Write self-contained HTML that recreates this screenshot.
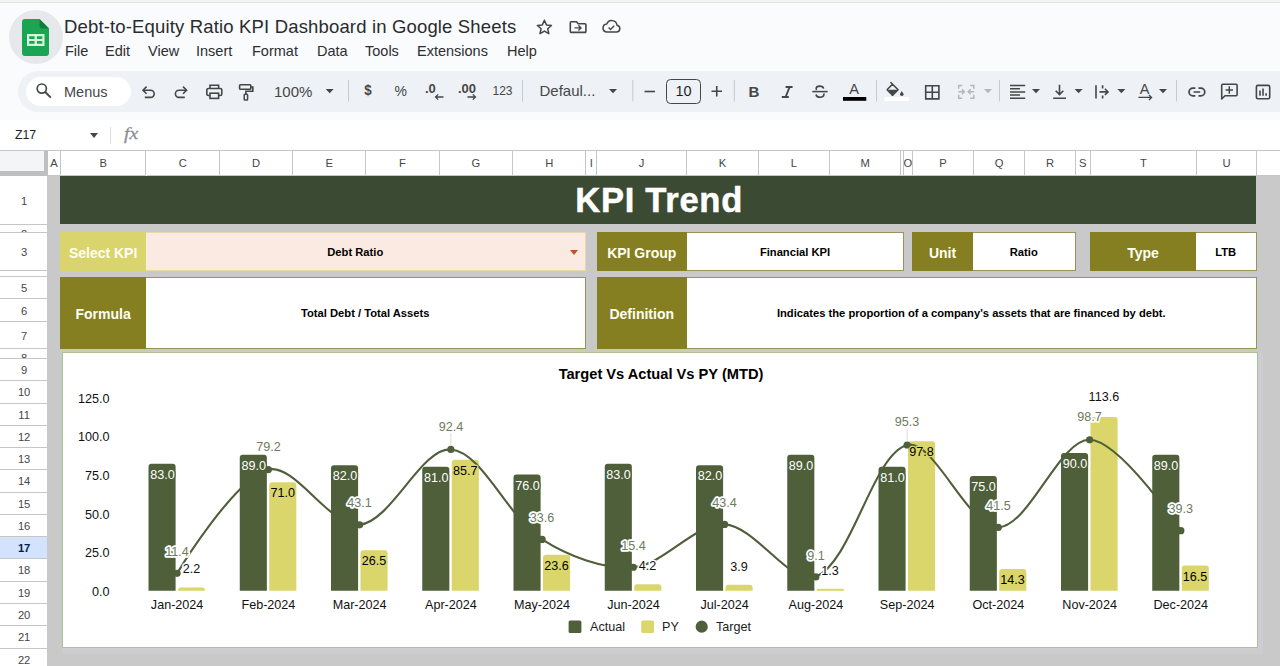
<!DOCTYPE html>
<html><head><meta charset="utf-8"><title>Debt-to-Equity Ratio KPI Dashboard</title>
<style>
html,body{margin:0;padding:0;}
html{overflow:hidden;width:1280px;height:666px;font-family:"Liberation Sans", sans-serif;}
body{width:1280px;height:666px;overflow:hidden;position:relative;background:#fff;font-family:"Liberation Sans", sans-serif;}
.abs{position:absolute;}
svg text{font-family:"Liberation Sans", sans-serif;}
.colh{position:absolute;top:151px;height:25px;line-height:24.5px;box-sizing:border-box;border-right:1px solid #c4c7c5;border-bottom:1px solid #c4c7c5;background:#fff;color:#444746;font-size:11.2px;text-align:center;overflow:hidden;}
.rowh{position:absolute;left:0;width:47.25px;box-sizing:border-box;border-bottom:1px solid #c4c7c5;background:#fff;color:#444746;font-size:11.2px;text-align:center;overflow:hidden;}
.rowh.sel{background:#d3e3fd;color:#041e49;font-weight:bold;}
.box{box-sizing:border-box;display:flex;align-items:center;justify-content:center;white-space:nowrap;}
.lab{color:#fffef2;font-weight:bold;font-size:14px;padding-top:2px;}
.val{color:#000;font-weight:bold;font-size:11.2px;}
.ttl{color:#fff;font-weight:bold;font-size:34.6px;letter-spacing:0.7px;-webkit-text-stroke:0.5px #fff;position:relative;top:0.5px;left:1px}
.ctitle{text-align:center;font-weight:bold;font-size:14.65px;color:#000;}
.doc-title{font-size:18.5px;letter-spacing:0.16px;color:#2a2b2d;white-space:nowrap;}
.menu{font-size:14.5px;color:#2d2e30;white-space:nowrap;}
.tb{font-size:14.5px;color:#444746;white-space:nowrap;}
</style></head>
<body>
<div id="root" style="position:absolute;left:0;top:0;width:1280px;height:666px;overflow:hidden">
<div class="abs" style="left:0;top:0;width:1280px;height:120px;background:#f9fbfd"></div>
<div class="abs" style="left:0;top:0;width:1280px;height:2px;background:#f4f3ef"></div>
<div class="abs" style="left:0;top:2px;width:1280px;height:1px;background:#e3e3e3"></div>
<div class="abs" style="left:8.5px;top:10px;width:54px;height:54px;border-radius:50%;background:#e6e8ec"></div>
<svg class="abs" style="left:22px;top:19px" width="27" height="37" viewBox="0 0 27 37">
<path d="M3 0H17.5L27 9.5V34a3 3 0 0 1-3 3H3a3 3 0 0 1-3-3V3a3 3 0 0 1 3-3Z" fill="#1aa553"/>
<path d="M17.5 0L27 9.5H20.5a3 3 0 0 1-3-3Z" fill="#0c7f3a"/>
<path d="M5 15h17.5v12H5Z M7.2 17.2v2.7h5.4v-2.7Z M14.9 17.2v2.7h5.4v-2.7Z M7.2 22.1v2.7h5.4v-2.7Z M14.9 22.1v2.7h5.4v-2.7Z" fill="#d6f5dc" fill-rule="evenodd"/>
</svg>
<div class="abs doc-title" style="left:64px;top:16px">Debt-to-Equity Ratio KPI Dashboard in Google Sheets</div>
<div class="abs menu" style="left:65px;top:42.5px">File</div>
<div class="abs menu" style="left:105px;top:42.5px">Edit</div>
<div class="abs menu" style="left:148px;top:42.5px">View</div>
<div class="abs menu" style="left:196px;top:42.5px">Insert</div>
<div class="abs menu" style="left:252px;top:42.5px">Format</div>
<div class="abs menu" style="left:317px;top:42.5px">Data</div>
<div class="abs menu" style="left:365px;top:42.5px">Tools</div>
<div class="abs menu" style="left:417px;top:42.5px">Extensions</div>
<div class="abs menu" style="left:507px;top:42.5px">Help</div>
<div class="abs" style="left:17.5px;top:71px;width:1300px;height:41px;border-radius:21px;background:#eef1f6"></div>
<div class="abs" style="left:25.5px;top:77px;width:105px;height:29px;border-radius:15px;background:#fff"></div>
<div class="abs tb" style="left:64px;top:83.5px;">Menus</div>
<div class="abs" style="left:0;top:120px;width:1280px;height:30px;background:#fff"></div>
<div class="abs" style="left:15px;top:127.5px;font-size:12.3px;color:#202124;">Z17</div>
<div class="abs" style="left:90px;top:132.5px;width:0;height:0;border-left:4.5px solid transparent;border-right:4.5px solid transparent;border-top:5px solid #444746"></div>
<div class="abs" style="left:110px;top:127px;width:1px;height:17px;background:#dadce0"></div>
<div class="abs" style="left:123.5px;top:124px;font-size:17px;transform:scaleX(1.15);transform-origin:0 0;font-style:italic;color:#8a8f95;-webkit-text-stroke:0.3px #8a8f95;font-family:'Liberation Serif',serif;">fx</div>
<svg class="abs" style="left:0;top:0" width="1280" height="120" viewBox="0 0 1280 120" fill="none" stroke="#444746" stroke-width="1.6" stroke-linecap="butt" stroke-linejoin="miter">
<!-- header icons -->
<path d="M544.4 20.3l2.05 4.6 5 .5-3.75 3.35 1.1 4.9-4.4-2.6-4.4 2.6 1.1-4.9-3.75-3.35 5-.5z" stroke-linejoin="round" stroke-width="1.5"/>
<path d="M571.2 21.8h5.3l1.7 1.9h6.8a.9.9 0 0 1 .9.9v6.9a.9.9 0 0 1-.9.9h-13.8a.9.9 0 0 1-.9-.9v-8.8a.9.9 0 0 1 .9-.9z" stroke-width="1.6" stroke-linejoin="round"/>
<path d="M574.5 27.9h6.2M578.4 25.3l2.6 2.6-2.6 2.6" stroke-width="1.4"/>
<path d="M606.5 32h10a3.4 3.4 0 0 0 .5-6.75 5.3 5.3 0 0 0-10.2-1.3A4.05 4.05 0 0 0 606.5 32z" stroke-width="1.5" stroke-linejoin="round"/>
<path d="M608.6 27.6l1.9 1.9 3.7-3.7" stroke-width="1.4"/>
<!-- search -->
<circle cx="41.8" cy="88.6" r="4.6" stroke-width="1.7"/>
<path d="M45.2 92l5.6 5.6" stroke-width="1.9"/>
<!-- undo -->
<path d="M146.6 86.6l-3.6 3.6 3.6 3.6" stroke-width="1.6"/>
<path d="M143.4 90.2h7.2a3.6 3.6 0 0 1 0 7.2h-5.8" stroke-width="1.6"/>
<!-- redo -->
<path d="M183 86.6l3.6 3.6-3.6 3.6" stroke-width="1.6"/>
<path d="M186.2 90.2h-7.2a3.6 3.6 0 0 0 0 7.2h5.8" stroke-width="1.6"/>
<!-- print -->
<path d="M210 88.5v-3.3h8.6v3.3" stroke-width="1.6"/>
<rect x="206.8" y="88.5" width="15" height="7" rx="1.6" stroke-width="1.6"/>
<rect x="210" y="93.2" width="8.6" height="5.2" fill="#eef1f6" stroke-width="1.6"/>
<!-- paint format -->
<rect x="239.6" y="84.8" width="11.2" height="4.4" rx="0.8" stroke-width="1.6"/>
<path d="M250.8 87h2v4.3h-6.9v3" stroke-width="1.6"/>
<rect x="244.2" y="94.3" width="3.4" height="5.8" rx="0.8" stroke-width="1.5"/>
<!-- separators -->
<g stroke="#c7c9cc" stroke-width="1">
<path d="M348.5 80v21.5M522.5 80v21.5M632.8 80v21.5M734.3 80v21.5M876.5 80v21.5M999.5 80v21.5M1176.5 80v21.5"/>
</g>
<!-- carets -->
<g fill="#444746" stroke="none">
<path d="M325.7 89h8l-4 4.2z"/>
<path d="M609 89h8l-4 4.2z"/>
<path d="M1032 89h8l-4 4.2z"/>
<path d="M1074.6 89h8l-4 4.2z"/>
<path d="M1117.4 89h8l-4 4.2z"/>
<path d="M1159 89h8l-4 4.2z"/>
</g>
<path d="M984 89h8l-4 4.2z" fill="#b4b7bb" stroke="none"/>
<!-- decimal arrows -->
<path d="M443.5 97h-8M438.2 94.4l-2.7 2.6 2.7 2.6" stroke-width="1.3"/>
<path d="M467.5 97h8M472.8 94.4l2.7 2.6-2.7 2.6" stroke-width="1.3"/>
<!-- minus / plus -->
<path d="M644.5 91.5h10.5" stroke-width="1.6"/>
<path d="M711.5 91.3h10.5M716.75 86v10.5" stroke-width="1.6"/>
<rect x="666.5" y="79.5" width="34" height="24" rx="4" stroke-width="1" stroke="#444746"/>
<!-- italic -->
<path d="M785.6 87h7M781.8 97h7M789.6 87l-4 10" stroke-width="1.9"/>
<!-- strikethrough -->
<path d="M812.3 91.6h15.4" stroke-width="1.5"/>
<path d="M823.6 88.6c-.3-1.6-1.7-2.5-3.7-2.5-2.2 0-3.7 1-3.7 2.5 0 .5.1.9.4 1.3M816 94.5c.3 1.7 1.8 2.7 4 2.7s3.900-1 3.900-2.600c0-.4-.1-.8-.3-1.100" stroke-width="1.6"/>
<!-- text color bar -->
<rect x="843" y="97" width="23.3" height="3.8" fill="#000" stroke="none"/>
<!-- fill color -->
<rect x="884.5" y="97" width="24.3" height="4" fill="#fff" stroke="none"/>
<path d="M890.5 82.2l7.6 7.6-5 5a.8.8 0 0 1-1.100 0l-4.500-4.500a.8.8 0 0 1 0-1.100l5.200-5.200" stroke-width="1.6" stroke-linejoin="round"/>
<path d="M887.6 89.800h10.200l-5.300 5.200z" fill="#444746" stroke="none"/>
<path d="M901.8 91.200s-1.800 2-1.800 3.100a1.800 1.800 0 0 0 3.600 0c0-1.100-1.800-3.100-1.800-3.100z" fill="#444746" stroke="none"/>
<!-- borders -->
<path d="M925.700 85.700h13.200v13.200h-13.200zM932.300 85.700v13.200M925.700 92.300h13.200" stroke-width="1.600"/>
<!-- merge (disabled) -->
<g stroke="#b4b7bb" stroke-width="1.500">
<path d="M962.300 85.400h-3.600v3.400M962.300 98.200h-3.600v-3.400M970.200 85.400h3.600v3.400M970.200 98.200h3.600v-3.400"/>
<path d="M958.300 91.800h5.800M961.900 89.400l2.400 2.400-2.400 2.400M974.200 91.800h-5.800M970.600 89.400l-2.400 2.400 2.400 2.400"/>
</g>
<!-- align left -->
<path d="M1010 85.500h15.200M1010 88.700h10M1010 91.900h15.200M1010 95.100h10M1010 98.300h15.200" stroke-width="1.500"/>
<!-- valign bottom -->
<path d="M1059.500 84.800v9.600M1055.700 90.800l3.800 3.800 3.800-3.800M1053.200 98.300h12.800" stroke-width="1.600"/>
<!-- wrap overflow -->
<path d="M1096 85.200v13.400M1102.600 85.200v3.200M1102.600 95.400v3.200M1099.500 91.900h8.200M1104.900 88.800l3.100 3.100-3.100 3.100" stroke-width="1.600"/>
<!-- rotate -->
<path d="M1138.400 97.400h13M1149 94.900l2.500 2.500-2.500 2.500" stroke-width="1.400"/>
<!-- link -->
<path d="M1195.300 88.100h-2.400a3.900 3.900 0 0 0 0 7.800h2.400M1198.500 88.100h2.400a3.900 3.900 0 0 1 0 7.800h-2.400M1193.600 92h6.600" stroke-width="1.700"/>
<!-- comment -->
<path d="M1222.600 84.300h13.600a.9.900 0 0 1 .9.900v9.600a.9.900 0 0 1-.9.900h-11.200l-3.300 3.300v-13.800a.9.900 0 0 1 .9-.9z" stroke-width="1.600" stroke-linejoin="round"/>
<path d="M1225.600 90h7.400M1229.300 86.300v7.400" stroke-width="1.500"/>
<!-- chart -->
<rect x="1256.400" y="85.400" width="13.300" height="13.300" rx="1.500" stroke-width="1.600"/>
<path d="M1260 90.500v5.200M1263 88.400v7.300M1266.100 93.200v2.500" stroke-width="1.600"/>
</svg>
<div class="abs tb" style="left:274px;top:82.500px;font-size:15px">100%</div>
<div class="abs tb" style="left:363.500px;top:82px;font-size:14px;font-weight:bold;color:#444746;transform:scaleX(.95)">$</div>
<div class="abs tb" style="left:394.500px;top:82.500px;font-size:14px;">%</div>
<div class="abs tb" style="left:425px;top:81px;font-size:13px;font-weight:bold">.0</div>
<div class="abs tb" style="left:458px;top:81px;font-size:13px;font-weight:bold">.00</div>
<div class="abs tb" style="left:492.500px;top:84px;font-size:12px;">123</div>
<div class="abs tb" style="left:539.500px;top:82px;font-size:15px;">Defaul...</div>
<div class="abs tb" style="left:666.500px;top:82.500px;width:34px;text-align:center;font-size:14.500px;color:#1f1f1f">10</div>
<div class="abs tb" style="left:748.500px;top:82.500px;font-size:15px;font-weight:bold;">B</div>
<div class="abs tb" style="left:849.300px;top:80.800px;font-size:14.600px;">A</div>
<div class="abs tb" style="left:1139.800px;top:80.500px;font-size:14.500px;">A</div>

<div class="abs" style="left:47px;top:175px;width:1233px;height:491px;background:#c9c9c9"></div>
<div class="abs box " style="left:60.25px;top:176px;width:1195.75px;height:47.5px;background:#3b4a32;"><span class="ttl">KPI Trend</span></div>
<div class="abs box lab" style="left:60.25px;top:232.4px;width:85.75px;height:38.599999999999994px;background:#d9d46c;">Select KPI</div>
<div class="abs box val" style="left:146px;top:232.4px;width:439.5px;height:38.599999999999994px;background:#fbeae2;border:1px solid #ead9a8;border-left:none;padding-right:20px;">Debt Ratio</div>
<div class="abs" style="left:570px;top:250px;width:0;height:0;border-left:4.5px solid transparent;border-right:4.5px solid transparent;border-top:5px solid #c4512c"></div>
<div class="abs box lab" style="left:596.5px;top:232.4px;width:90.5px;height:38.599999999999994px;background:#857f21;">KPI Group</div>
<div class="abs box val" style="left:687px;top:232.4px;width:217px;height:38.599999999999994px;background:#fff;border:1px solid #99935a;border-left:none;">Financial KPI</div>
<div class="abs box lab" style="left:912px;top:232.4px;width:61px;height:38.599999999999994px;background:#857f21;">Unit</div>
<div class="abs box val" style="left:973px;top:232.4px;width:102.5px;height:38.599999999999994px;background:#fff;border:1px solid #99935a;border-left:none;">Ratio</div>
<div class="abs box lab" style="left:1090px;top:232.4px;width:106px;height:38.599999999999994px;background:#857f21;">Type</div>
<div class="abs box val" style="left:1196px;top:232.4px;width:60.5px;height:38.599999999999994px;background:#fff;border:1px solid #99935a;border-left:none;">LTB</div>
<div class="abs box lab" style="left:60.25px;top:277px;width:85.75px;height:71.5px;background:#857f21;">Formula</div>
<div class="abs box val" style="left:146px;top:277px;width:439.5px;height:71.5px;background:#fff;border:1px solid #99935a;border-left:none;">Total Debt / Total Assets</div>
<div class="abs box lab" style="left:596.5px;top:277px;width:90.5px;height:71.5px;background:#857f21;">Definition</div>
<div class="abs box val" style="left:687px;top:277px;width:569.5px;height:71.5px;background:#fff;border:1px solid #99935a;border-left:none;">Indicates the proportion of a company's assets that are financed by debt.</div>
<div class="abs" style="left:60.25px;top:349.1px;width:1198.1px;height:4px;background:#c9cdba"></div>
<div class="abs" style="left:1258.4px;top:353px;width:5px;height:300px;background:#cdcdd1"></div>
<div class="abs" style="left:62px;top:648.2px;width:1201.4px;height:6px;background:#cdcdd1"></div>
<div class="abs" style="left:61.9px;top:352.4px;width:1196.5px;height:295.8px;background:#fff;border:1.2px solid #adc09a;box-sizing:border-box"></div>
<div class="abs ctitle" style="left:63.5px;top:366px;width:1195px;">Target Vs Actual Vs PY (MTD)</div>
<div class="abs" style="left:0;top:150px;width:1280px;height:26px;background:#fff;border-top:1px solid #c4c7c5;box-sizing:border-box"></div>
<div class="colh" style="left:48px;width:12.899999999999999px">A</div>
<div class="colh" style="left:60.9px;width:85.6px">B</div>
<div class="colh" style="left:146.5px;width:73.4px">C</div>
<div class="colh" style="left:219.9px;width:73.20000000000002px">D</div>
<div class="colh" style="left:293.1px;width:73.29999999999995px">E</div>
<div class="colh" style="left:366.4px;width:73.30000000000001px">F</div>
<div class="colh" style="left:439.7px;width:73.30000000000001px">G</div>
<div class="colh" style="left:513.0px;width:73.39999999999998px">H</div>
<div class="colh" style="left:586.4px;width:10.899999999999977px">I</div>
<div class="colh" style="left:597.3px;width:89.70000000000005px">J</div>
<div class="colh" style="left:687.0px;width:71.79999999999995px">K</div>
<div class="colh" style="left:758.8px;width:71.10000000000002px">L</div>
<div class="colh" style="left:829.9px;width:71.39999999999998px">M</div>
<div class="colh" style="left:901.3px;width:2.300000000000068px"></div>
<div class="colh" style="left:903.6px;width:9.299999999999955px">O</div>
<div class="colh" style="left:912.9px;width:61.200000000000045px">P</div>
<div class="colh" style="left:974.1px;width:51.10000000000002px">Q</div>
<div class="colh" style="left:1025.2px;width:50.5px">R</div>
<div class="colh" style="left:1075.7px;width:15.099999999999909px">S</div>
<div class="colh" style="left:1090.8px;width:106.0px">T</div>
<div class="colh" style="left:1196.8px;width:60.299999999999955px">U</div>
<div class="colh" style="left:1257.1px;width:43.40000000000009px"></div>
<div class="abs" style="left:0;top:175px;width:47.25px;height:500px;background:#fff"></div>
<div class="rowh" style="top:176px;height:48.69999999999999px;line-height:50.09999999999999px;text-indent:1px">1</div>
<div class="rowh" style="top:224.7px;height:8.100000000000023px;line-height:12px;"><span style="position:relative;top:3.3px;left:0.5px">2</span></div>
<div class="rowh" style="top:232.8px;height:38.30000000000001px;line-height:39.70000000000001px;text-indent:1px">3</div>
<div class="rowh" style="top:271.1px;height:6.199999999999989px;line-height:12px;"><span style="position:relative;top:3.3px;left:0.5px">4</span></div>
<div class="rowh" style="top:277.3px;height:22.19999999999999px;line-height:23.599999999999987px;text-indent:1px">5</div>
<div class="rowh" style="top:299.5px;height:22.5px;line-height:23.9px;text-indent:1px">6</div>
<div class="rowh" style="top:322px;height:27.100000000000023px;line-height:28.50000000000002px;text-indent:1px">7</div>
<div class="rowh" style="top:349.1px;height:9.899999999999977px;line-height:12px;"><span style="position:relative;top:3.3px;left:0.5px">8</span></div>
<div class="rowh" style="top:359.0px;height:22.269999999999982px;line-height:23.66999999999998px;text-indent:1px">9</div>
<div class="rowh" style="top:381.27px;height:22.27000000000004px;line-height:23.670000000000037px;text-indent:1px">10</div>
<div class="rowh" style="top:403.54px;height:22.269999999999982px;line-height:23.66999999999998px;text-indent:1px">11</div>
<div class="rowh" style="top:425.81px;height:22.269999999999982px;line-height:23.66999999999998px;text-indent:1px">12</div>
<div class="rowh" style="top:448.08px;height:22.27000000000004px;line-height:23.670000000000037px;text-indent:1px">13</div>
<div class="rowh" style="top:470.35px;height:22.269999999999982px;line-height:23.66999999999998px;text-indent:1px">14</div>
<div class="rowh" style="top:492.62px;height:22.269999999999982px;line-height:23.66999999999998px;text-indent:1px">15</div>
<div class="rowh" style="top:514.89px;height:22.269999999999982px;line-height:23.66999999999998px;text-indent:1px">16</div>
<div class="rowh sel" style="top:537.16px;height:22.270000000000095px;line-height:23.670000000000094px;text-indent:1px">17</div>
<div class="rowh" style="top:559.4300000000001px;height:22.269999999999982px;line-height:23.66999999999998px;text-indent:1px">18</div>
<div class="rowh" style="top:581.7px;height:22.269999999999982px;line-height:23.66999999999998px;text-indent:1px">19</div>
<div class="rowh" style="top:603.97px;height:22.269999999999982px;line-height:23.66999999999998px;text-indent:1px">20</div>
<div class="rowh" style="top:626.24px;height:22.269999999999982px;line-height:23.66999999999998px;text-indent:1px">21</div>
<div class="rowh" style="top:648.51px;height:22.269999999999982px;line-height:23.66999999999998px;text-indent:1px">22</div>
<div class="rowh" style="top:670.78px;height:22.269999999999982px;line-height:23.66999999999998px;text-indent:1px">23</div>
<div class="abs" style="left:0;top:151px;width:44px;height:20px;background:#f4f5f7"></div>
<div class="abs" style="left:44px;top:151px;width:4px;height:25px;background:#bfbfbf"></div>
<div class="abs" style="left:0;top:171px;width:48px;height:5px;background:#bfbfbf"></div>
<svg class="abs" style="left:0;top:0" width="1280" height="666" viewBox="0 0 1280 666">
<text x="109.6" y="595.8" text-anchor="end" font-size="12.6" fill="#111">0.0</text>
<text x="109.6" y="557.2" text-anchor="end" font-size="12.6" fill="#111">25.0</text>
<text x="109.6" y="518.5" text-anchor="end" font-size="12.6" fill="#111">50.0</text>
<text x="109.6" y="479.9" text-anchor="end" font-size="12.6" fill="#111">75.0</text>
<text x="109.6" y="441.3" text-anchor="end" font-size="12.6" fill="#111">100.0</text>
<text x="109.6" y="402.7" text-anchor="end" font-size="12.6" fill="#111">125.0</text>
<path d="M148.50 590.80V466.81Q148.50 463.81 151.50 463.81H172.60Q175.60 463.81 175.60 466.81V590.80Z" fill="#4f5f3a"/>
<path d="M178.00 590.80V590.43Q178.00 587.43 181.00 587.43H202.10Q205.10 587.43 205.10 590.43V590.80Z" fill="#dbd66c"/>
<path d="M239.75 590.80V457.63Q239.75 454.63 242.75 454.63H263.85Q266.85 454.63 266.85 457.63V590.80Z" fill="#4f5f3a"/>
<path d="M269.25 590.80V485.17Q269.25 482.17 272.25 482.17H293.35Q296.35 482.17 296.35 485.17V590.80Z" fill="#dbd66c"/>
<path d="M331.00 590.80V468.34Q331.00 465.34 334.00 465.34H355.10Q358.10 465.34 358.10 468.34V590.80Z" fill="#4f5f3a"/>
<path d="M360.50 590.80V553.25Q360.50 550.25 363.50 550.25H384.60Q387.60 550.25 387.60 553.25V590.80Z" fill="#dbd66c"/>
<path d="M422.25 590.80V469.87Q422.25 466.87 425.25 466.87H446.35Q449.35 466.87 449.35 469.87V590.80Z" fill="#4f5f3a"/>
<path d="M451.75 590.80V462.68Q451.75 459.68 454.75 459.68H475.85Q478.85 459.68 478.85 462.68V590.80Z" fill="#dbd66c"/>
<path d="M513.50 590.80V477.52Q513.50 474.52 516.50 474.52H537.60Q540.60 474.52 540.60 477.52V590.80Z" fill="#4f5f3a"/>
<path d="M543.00 590.80V557.69Q543.00 554.69 546.00 554.69H567.10Q570.10 554.69 570.10 557.69V590.80Z" fill="#dbd66c"/>
<path d="M604.75 590.80V466.81Q604.75 463.81 607.75 463.81H628.85Q631.85 463.81 631.85 466.81V590.80Z" fill="#4f5f3a"/>
<path d="M634.25 590.80V587.37Q634.25 584.37 637.25 584.37H658.35Q661.35 584.37 661.35 587.37V590.80Z" fill="#dbd66c"/>
<path d="M696.00 590.80V468.34Q696.00 465.34 699.00 465.34H720.10Q723.10 465.34 723.10 468.34V590.80Z" fill="#4f5f3a"/>
<path d="M725.50 590.80V587.83Q725.50 584.83 728.50 584.83H749.60Q752.60 584.83 752.60 587.83V590.80Z" fill="#dbd66c"/>
<path d="M787.25 590.80V457.63Q787.25 454.63 790.25 454.63H811.35Q814.35 454.63 814.35 457.63V590.80Z" fill="#4f5f3a"/>
<rect x="816.75" y="588.81" width="27.10" height="1.99" fill="#dbd66c"/>
<path d="M878.50 590.80V469.87Q878.50 466.87 881.50 466.87H902.60Q905.60 466.87 905.60 469.87V590.80Z" fill="#4f5f3a"/>
<path d="M908.00 590.80V444.17Q908.00 441.17 911.00 441.17H932.10Q935.10 441.17 935.10 444.17V590.80Z" fill="#dbd66c"/>
<path d="M969.75 590.80V479.05Q969.75 476.05 972.75 476.05H993.85Q996.85 476.05 996.85 479.05V590.80Z" fill="#4f5f3a"/>
<path d="M999.25 590.80V571.92Q999.25 568.92 1002.25 568.92H1023.35Q1026.35 568.92 1026.35 571.92V590.80Z" fill="#dbd66c"/>
<path d="M1061.00 590.80V456.10Q1061.00 453.10 1064.00 453.10H1085.10Q1088.10 453.10 1088.10 456.10V590.80Z" fill="#4f5f3a"/>
<path d="M1090.50 590.80V419.99Q1090.50 416.99 1093.50 416.99H1114.60Q1117.60 416.99 1117.60 419.99V590.80Z" fill="#dbd66c"/>
<path d="M1152.25 590.80V457.63Q1152.25 454.63 1155.25 454.63H1176.35Q1179.35 454.63 1179.35 457.63V590.80Z" fill="#4f5f3a"/>
<path d="M1181.75 590.80V568.55Q1181.75 565.55 1184.75 565.55H1205.85Q1208.85 565.55 1208.85 568.55V590.80Z" fill="#dbd66c"/>
<path d="M177.10 573.36C177.10 573.36 234.02 478.75 268.35 469.62C294.85 462.58 330.77 528.05 359.60 524.86C391.60 521.32 421.64 447.10 450.85 449.43C482.47 451.95 507.23 516.88 542.10 539.39C568.06 556.15 603.77 569.67 633.35 567.24C664.60 564.67 694.84 522.83 724.60 524.40C755.67 526.04 791.74 587.37 815.85 576.88C852.58 560.90 872.66 454.35 907.10 444.99C933.49 437.82 968.37 528.16 998.35 527.30C1029.20 526.43 1059.46 439.23 1089.60 439.79C1120.30 440.36 1180.85 530.67 1180.85 530.67" fill="none" stroke="#4f5f3a" stroke-width="2.1"/>
<circle cx="177.10" cy="573.36" r="3.6" fill="#4f5f3a"/>
<circle cx="268.35" cy="469.62" r="3.6" fill="#4f5f3a"/>
<circle cx="359.60" cy="524.86" r="3.6" fill="#4f5f3a"/>
<circle cx="450.85" cy="449.43" r="3.6" fill="#4f5f3a"/>
<circle cx="542.10" cy="539.39" r="3.6" fill="#4f5f3a"/>
<circle cx="633.35" cy="567.24" r="3.6" fill="#4f5f3a"/>
<circle cx="724.60" cy="524.40" r="3.6" fill="#4f5f3a"/>
<circle cx="815.85" cy="576.88" r="3.6" fill="#4f5f3a"/>
<circle cx="907.10" cy="444.99" r="3.6" fill="#4f5f3a"/>
<circle cx="998.35" cy="527.30" r="3.6" fill="#4f5f3a"/>
<circle cx="1089.60" cy="439.79" r="3.6" fill="#4f5f3a"/>
<circle cx="1180.85" cy="530.67" r="3.6" fill="#4f5f3a"/>
<path d="M450.9 445.4V433.4" stroke="#dcdcdc" stroke-width="1"/>
<path d="M907.1 441.0V429.0" stroke="#dcdcdc" stroke-width="1"/>
<text x="177.1" y="556.2" font-size="12.6" text-anchor="middle" paint-order="stroke" stroke-linejoin="round" fill="#6e7a5c" stroke="#fff" stroke-width="3.4">11.4</text>
<text x="268.4" y="451.0" font-size="12.6" text-anchor="middle" paint-order="stroke" stroke-linejoin="round" fill="#6e7a5c" stroke="#fff" stroke-width="3.4">79.2</text>
<text x="359.6" y="507.0" font-size="12.6" text-anchor="middle" paint-order="stroke" stroke-linejoin="round" fill="#6e7a5c" stroke="#fff" stroke-width="3.4">43.1</text>
<text x="450.9" y="430.5" font-size="12.6" text-anchor="middle" paint-order="stroke" stroke-linejoin="round" fill="#6e7a5c" stroke="#fff" stroke-width="3.4">92.4</text>
<text x="542.1" y="521.8" font-size="12.6" text-anchor="middle" paint-order="stroke" stroke-linejoin="round" fill="#6e7a5c" stroke="#fff" stroke-width="3.4">33.6</text>
<text x="633.4" y="550.0" font-size="12.6" text-anchor="middle" paint-order="stroke" stroke-linejoin="round" fill="#6e7a5c" stroke="#fff" stroke-width="3.4">15.4</text>
<text x="724.6" y="506.6" font-size="12.6" text-anchor="middle" paint-order="stroke" stroke-linejoin="round" fill="#6e7a5c" stroke="#fff" stroke-width="3.4">43.4</text>
<text x="815.9" y="559.8" font-size="12.6" text-anchor="middle" paint-order="stroke" stroke-linejoin="round" fill="#6e7a5c" stroke="#fff" stroke-width="3.4">9.1</text>
<text x="907.1" y="426.0" font-size="12.6" text-anchor="middle" paint-order="stroke" stroke-linejoin="round" fill="#6e7a5c" stroke="#fff" stroke-width="3.4">95.3</text>
<text x="998.4" y="509.5" font-size="12.6" text-anchor="middle" paint-order="stroke" stroke-linejoin="round" fill="#6e7a5c" stroke="#fff" stroke-width="3.4">41.5</text>
<text x="1089.6" y="420.8" font-size="12.6" text-anchor="middle" paint-order="stroke" stroke-linejoin="round" fill="#6e7a5c" stroke="#fff" stroke-width="3.4">98.7</text>
<text x="1180.8" y="512.9" font-size="12.6" text-anchor="middle" paint-order="stroke" stroke-linejoin="round" fill="#6e7a5c" stroke="#fff" stroke-width="3.4">39.3</text>
<text x="162.4"  y="478.8" font-size="12.6" text-anchor="middle" paint-order="stroke" stroke-linejoin="round" fill="#fff" stroke="#4f5f3a" stroke-width="2.5">83.0</text>
<text x="191.4"  y="573.2" font-size="12.6" text-anchor="middle" paint-order="stroke" stroke-linejoin="round" fill="#111" stroke="#fff" stroke-width="3">2.2</text>
<text x="253.7"  y="469.6" font-size="12.6" text-anchor="middle" paint-order="stroke" stroke-linejoin="round" fill="#fff" stroke="#4f5f3a" stroke-width="2.5">89.0</text>
<text x="282.7"  y="497.2" font-size="12.6" text-anchor="middle" paint-order="stroke" stroke-linejoin="round" fill="#000" stroke="#dbd66c" stroke-width="2.5">71.0</text>
<text x="344.9"  y="480.3" font-size="12.6" text-anchor="middle" paint-order="stroke" stroke-linejoin="round" fill="#fff" stroke="#4f5f3a" stroke-width="2.5">82.0</text>
<text x="373.9"  y="565.3" font-size="12.6" text-anchor="middle" paint-order="stroke" stroke-linejoin="round" fill="#000" stroke="#dbd66c" stroke-width="2.5">26.5</text>
<text x="436.2"  y="481.9" font-size="12.6" text-anchor="middle" paint-order="stroke" stroke-linejoin="round" fill="#fff" stroke="#4f5f3a" stroke-width="2.5">81.0</text>
<text x="465.2"  y="474.7" font-size="12.6" text-anchor="middle" paint-order="stroke" stroke-linejoin="round" fill="#000" stroke="#dbd66c" stroke-width="2.5">85.7</text>
<text x="527.4"  y="489.5" font-size="12.6" text-anchor="middle" paint-order="stroke" stroke-linejoin="round" fill="#fff" stroke="#4f5f3a" stroke-width="2.5">76.0</text>
<text x="556.4"  y="569.7" font-size="12.6" text-anchor="middle" paint-order="stroke" stroke-linejoin="round" fill="#000" stroke="#dbd66c" stroke-width="2.5">23.6</text>
<text x="618.6"  y="478.8" font-size="12.6" text-anchor="middle" paint-order="stroke" stroke-linejoin="round" fill="#fff" stroke="#4f5f3a" stroke-width="2.5">83.0</text>
<text x="647.6"  y="570.2" font-size="12.6" text-anchor="middle" paint-order="stroke" stroke-linejoin="round" fill="#111" stroke="#fff" stroke-width="3">4.2</text>
<text x="709.9"  y="480.3" font-size="12.6" text-anchor="middle" paint-order="stroke" stroke-linejoin="round" fill="#fff" stroke="#4f5f3a" stroke-width="2.5">82.0</text>
<text x="738.9"  y="570.6" font-size="12.6" text-anchor="middle" paint-order="stroke" stroke-linejoin="round" fill="#111" stroke="#fff" stroke-width="3">3.9</text>
<text x="801.1"  y="469.6" font-size="12.6" text-anchor="middle" paint-order="stroke" stroke-linejoin="round" fill="#fff" stroke="#4f5f3a" stroke-width="2.5">89.0</text>
<text x="830.1"  y="574.6" font-size="12.6" text-anchor="middle" paint-order="stroke" stroke-linejoin="round" fill="#111" stroke="#fff" stroke-width="3">1.3</text>
<text x="892.4"  y="481.9" font-size="12.6" text-anchor="middle" paint-order="stroke" stroke-linejoin="round" fill="#fff" stroke="#4f5f3a" stroke-width="2.5">81.0</text>
<text x="921.4"  y="456.2" font-size="12.6" text-anchor="middle" paint-order="stroke" stroke-linejoin="round" fill="#000" stroke="#dbd66c" stroke-width="2.5">97.8</text>
<text x="983.6"  y="491.0" font-size="12.6" text-anchor="middle" paint-order="stroke" stroke-linejoin="round" fill="#fff" stroke="#4f5f3a" stroke-width="2.5">75.0</text>
<text x="1012.6"  y="583.9" font-size="12.6" text-anchor="middle" paint-order="stroke" stroke-linejoin="round" fill="#000" stroke="#dbd66c" stroke-width="2.5">14.3</text>
<text x="1074.9"  y="468.1" font-size="12.6" text-anchor="middle" paint-order="stroke" stroke-linejoin="round" fill="#fff" stroke="#4f5f3a" stroke-width="2.5">90.0</text>
<text x="1103.9"  y="401.3" font-size="12.6" text-anchor="middle" paint-order="stroke" stroke-linejoin="round" fill="#111" stroke="#fff" stroke-width="3">113.6</text>
<text x="1166.1"  y="469.6" font-size="12.6" text-anchor="middle" paint-order="stroke" stroke-linejoin="round" fill="#fff" stroke="#4f5f3a" stroke-width="2.5">89.0</text>
<text x="1195.1"  y="580.6" font-size="12.6" text-anchor="middle" paint-order="stroke" stroke-linejoin="round" fill="#000" stroke="#dbd66c" stroke-width="2.5">16.5</text>
<text x="177.1" y="609" text-anchor="middle" font-size="12.6" fill="#111">Jan-2024</text>
<text x="268.4" y="609" text-anchor="middle" font-size="12.6" fill="#111">Feb-2024</text>
<text x="359.6" y="609" text-anchor="middle" font-size="12.6" fill="#111">Mar-2024</text>
<text x="450.9" y="609" text-anchor="middle" font-size="12.6" fill="#111">Apr-2024</text>
<text x="542.1" y="609" text-anchor="middle" font-size="12.6" fill="#111">May-2024</text>
<text x="633.4" y="609" text-anchor="middle" font-size="12.6" fill="#111">Jun-2024</text>
<text x="724.6" y="609" text-anchor="middle" font-size="12.6" fill="#111">Jul-2024</text>
<text x="815.9" y="609" text-anchor="middle" font-size="12.6" fill="#111">Aug-2024</text>
<text x="907.1" y="609" text-anchor="middle" font-size="12.6" fill="#111">Sep-2024</text>
<text x="998.4" y="609" text-anchor="middle" font-size="12.6" fill="#111">Oct-2024</text>
<text x="1089.6" y="609" text-anchor="middle" font-size="12.6" fill="#111">Nov-2024</text>
<text x="1180.8" y="609" text-anchor="middle" font-size="12.6" fill="#111">Dec-2024</text>
<rect x="568.6" y="620.4" width="12.8" height="12.6" rx="1.5" fill="#4f5f3a"/>
<text x="590" y="631.2" font-size="12.6" fill="#222">Actual</text>
<rect x="641.2" y="620.4" width="12.8" height="12.6" rx="1.5" fill="#dbd66c"/>
<text x="662" y="631.2" font-size="12.6" fill="#222">PY</text>
<circle cx="701.7" cy="626.7" r="6.1" fill="#4f5f3a"/>
<text x="716" y="631.2" font-size="12.6" fill="#222">Target</text>
</svg>
</div>
</body></html>
